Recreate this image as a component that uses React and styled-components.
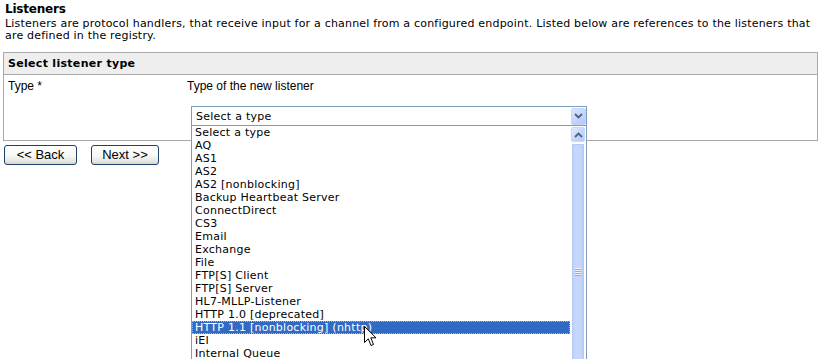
import React from "react";
import styled, { createGlobalStyle } from "styled-components";

const GlobalStyle = createGlobalStyle`
  html, body {
    margin: 0;
    padding: 0;
    background: #ffffff;
    overflow: hidden;
  }
  body {
    font-family: "DejaVu Sans", Verdana, sans-serif;
    color: #000;
  }
`;

const Page = styled.div`
  padding: 2px 2px 0 3px;
  width: 820px;
  height: 359px;
  box-sizing: border-box;
`;

const Title = styled.h1`
  margin: 0 0 0 2px;
  font-family: "DejaVu Sans", Verdana, sans-serif;
  font-size: 12px;
  font-weight: bold;
  line-height: 14px;
  letter-spacing: -0.2px;
`;

const Description = styled.p`
  margin: 2px 0 0 2px;
  font-size: 11px;
  line-height: 12px;
  letter-spacing: 0.2px;
`;

const FormTable = styled.div`
  margin-top: 10px;
  border: 1px solid #a9a9a9;
  width: 815px;
  box-sizing: border-box;
`;

const HeaderRow = styled.div`
  height: 21px;
  display: flex;
  align-items: center;
  padding-left: 4px;
  background: #eeeeee;
  border-bottom: 1px solid #a9a9a9;
  font-size: 11px;
  font-weight: bold;
  letter-spacing: 0.3px;
`;

const BodyRow = styled.div`
  display: grid;
  grid-template-columns: 179px 1fr;
`;

const LabelCell = styled.div`
  padding: 4px 4px;
  font-family: "Liberation Sans", Arial, sans-serif;
  font-size: 12px;
  line-height: 14px;
`;

const FieldCell = styled.div`
  padding: 4px 0 14px 4px;
  display: flex;
  flex-direction: column;
  align-items: flex-start;
`;

const Hint = styled.div`
  font-family: "Liberation Sans", Arial, sans-serif;
  font-size: 12px;
  line-height: 14px;
`;

const SelectWrap = styled.div`
  position: relative;
  margin: 13px 0 0 4px;
  width: 396px;
`;

const SelectBox = styled.div`
  height: 20px;
  box-sizing: border-box;
  border: 1px solid #7f9db9;
  display: flex;
  align-items: center;
  padding-left: 4px;
  background: #fff;
`;

const SelectValue = styled.span`
  flex: 1;
  font-size: 11px;
  letter-spacing: 0.25px;
  line-height: 13px;
`;

const ArrowButton = styled.div`
  width: 15px;
  height: 17px;
  box-sizing: border-box;
  border: 1px solid #c3d3fd;
  border-radius: 2px;
  background: linear-gradient(135deg, #dde6fe 0%, #c4d4fc 55%, #b3c7f8 100%);
  display: flex;
  align-items: center;
  justify-content: center;
`;

const DropList = styled.div`
  position: absolute;
  left: 0;
  top: 100%;
  width: 396px;
  height: 240px;
  box-sizing: border-box;
  border-left: 1px solid #7f9db9;
  border-right: 1px solid #7f9db9;
  background: #fff;
  display: flex;
  z-index: 5;
`;

const Options = styled.ul`
  list-style: none;
  margin: 0;
  padding: 0;
  flex: 1;
`;

const Option = styled.li`
  height: 13px;
  line-height: 13px;
  padding-left: 3px;
  font-size: 11px;
  letter-spacing: 0.25px;
  white-space: nowrap;
  box-sizing: border-box;
  background: ${(p) => (p.$selected ? "#316ac5" : "transparent")};
  color: ${(p) => (p.$selected ? "#ffffff" : "#000000")};
  outline: ${(p) => (p.$selected ? "1px dotted #e7b23c" : "none")};
  outline-offset: -1px;
`;

const ScrollBar = styled.div`
  width: 16px;
  background: #fdfdfd;
  display: flex;
  flex-direction: column;
  padding: 1px 1px 0 1px;
  box-sizing: border-box;
  gap: 1px;
`;

const ScrollButton = styled.div`
  height: 15px;
  box-sizing: border-box;
  border: 1px solid #c8d7fd;
  border-radius: 2px;
  background: linear-gradient(135deg, #e2eafe 0%, #c6d6fc 55%, #b6c9f8 100%);
  display: flex;
  align-items: center;
  justify-content: center;
`;

const Thumb = styled.div`
  flex: 1;
  box-sizing: border-box;
  border: 1px solid #ffffff;
  outline: 1px solid #b6c9f6;
  outline-offset: -2px;
  border-radius: 2px;
  background: linear-gradient(90deg, #b9cdfa 0%, #c6d7fd 30%, #c6d7fd 70%, #b4c9f7 100%);
  display: flex;
  flex-direction: column;
  align-items: center;
  padding-top: 124px;
`;

const GripLine = styled.div`
  width: 6px;
  height: 1px;
  background: #eef3ff;
  margin-bottom: 1px;
  box-shadow: 0 1px 0 #8faae8;
`;

const Cursor = styled.svg`
  position: absolute;
  left: 172px;
  top: 200px;
  pointer-events: none;
`;

const ButtonRow = styled.div`
  display: flex;
  gap: 14px;
  margin: 4px 0 0 1px;
`;

const Button = styled.button`
  width: ${(p) => p.$w}px;
  height: 20px;
  padding: 0;
  border: 1px solid #1f3f6d;
  border-radius: 3px;
  background: linear-gradient(180deg, #ffffff 0%, #f7f7f4 55%, #e6e5de 85%, #d6d4ca 100%);
  font-family: "Liberation Sans", Arial, sans-serif;
  font-size: 13px;
  line-height: 18px;
  color: #000;
`;

const items = [
  "Select a type",
  "AQ",
  "AS1",
  "AS2",
  "AS2 [nonblocking]",
  "Backup Heartbeat Server",
  "ConnectDirect",
  "CS3",
  "Email",
  "Exchange",
  "File",
  "FTP[S] Client",
  "FTP[S] Server",
  "HL7-MLLP-Listener",
  "HTTP 1.0 [deprecated]",
  "HTTP 1.1 [nonblocking] (nhttp)",
  "iEI",
  "Internal Queue",
  "JMS",
];

const Chevron = ({ up }) => (
  <svg width="9" height="6" viewBox="0 0 9 6">
    <path
      d={up ? "M1 5 L4.5 1.5 L8 5" : "M1 1 L4.5 4.5 L8 1"}
      fill="none"
      stroke="#4d6185"
      strokeWidth="1.8"
    />
  </svg>
);

export default function App() {
  return (
    <>
      <GlobalStyle />
      <Page>
        <Title>Listeners</Title>
        <Description>
          Listeners are protocol handlers, that receive input for a channel from a configured
          endpoint. Listed below are references to the listeners that are defined in the registry.
        </Description>
        <FormTable>
          <HeaderRow>Select listener type</HeaderRow>
          <BodyRow>
            <LabelCell>Type *</LabelCell>
            <FieldCell>
              <Hint>Type of the new listener</Hint>
              <SelectWrap>
                <SelectBox>
                  <SelectValue>Select a type</SelectValue>
                  <ArrowButton>
                    <Chevron />
                  </ArrowButton>
                </SelectBox>
                <DropList>
                  <Options>
                    {items.map((it) => (
                      <Option key={it} $selected={it === "HTTP 1.1 [nonblocking] (nhttp)"}>
                        {it}
                      </Option>
                    ))}
                  </Options>
                  <ScrollBar>
                    <ScrollButton>
                      <Chevron up />
                    </ScrollButton>
                    <Thumb>
                      <GripLine />
                      <GripLine />
                      <GripLine />
                      <GripLine />
                    </Thumb>
                  </ScrollBar>
                  <Cursor width="13" height="21" viewBox="0 0 13 21">
                    <path
                      d="M0.5 0.5 L0.5 16.5 L4.3 12.8 L7 19.5 L9.5 18.5 L6.8 11.8 L12 11.8 Z"
                      fill="#ffffff"
                      stroke="#000000"
                      strokeWidth="1"
                      strokeLinejoin="miter"
                    />
                  </Cursor>
                </DropList>
              </SelectWrap>
            </FieldCell>
          </BodyRow>
        </FormTable>
        <ButtonRow>
          <Button $w={73}>&lt;&lt; Back</Button>
          <Button $w={68}>Next &gt;&gt;</Button>
        </ButtonRow>
      </Page>
    </>
  );
}
